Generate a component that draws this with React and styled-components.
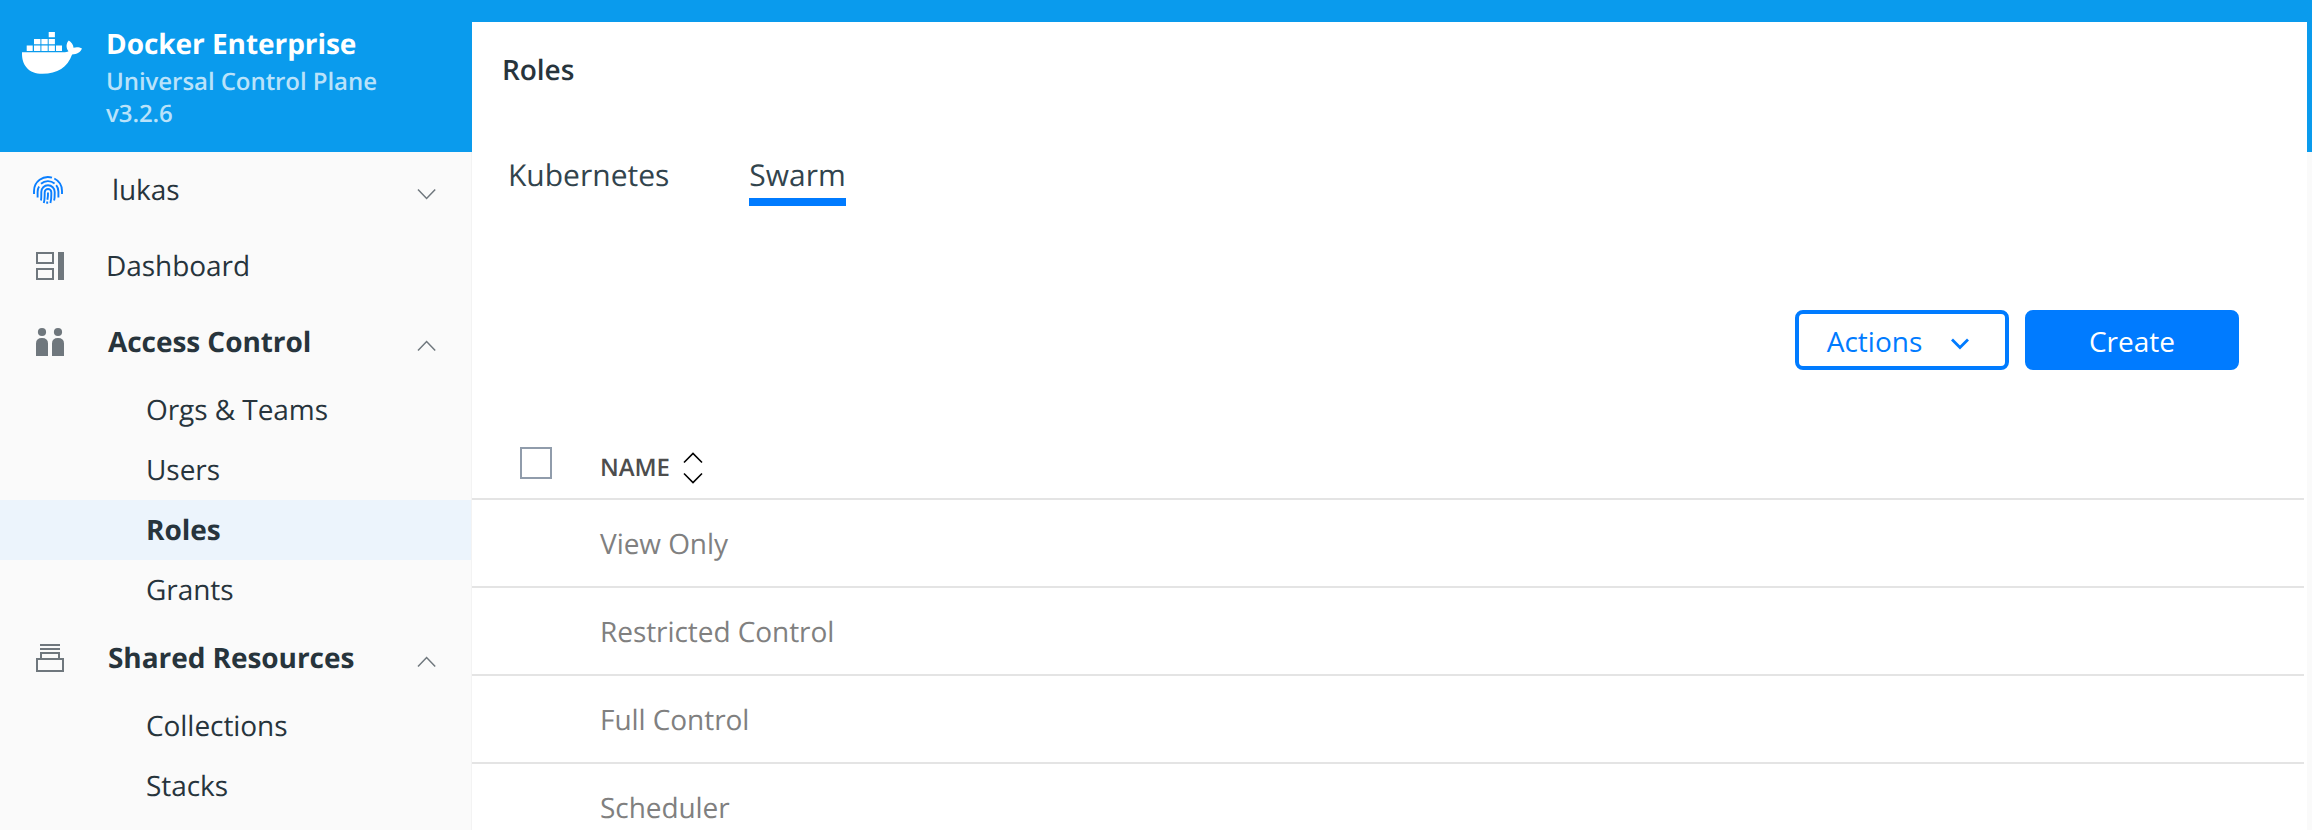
import React from "react";
import styled, { createGlobalStyle, css } from "styled-components";

const GlobalStyle = createGlobalStyle`
  *, *::before, *::after { box-sizing: border-box; }
  html, body, #root { height: 100%; }
  body {
    margin: 0;
    overflow: hidden;
    background: #fafafa;
    color: #27343c;
    font: 400 28px/38px "Open Sans", "Noto Sans", sans-serif;
    letter-spacing: -0.06px;
    text-rendering: geometricPrecision;
  }
`;

const Page = styled.div`
  display: flex;
  height: 830px;
  background: linear-gradient(#0a9bed 152px, #fafafa 152px);
`;

const Sidebar = styled.aside`
  width: 472px;
  flex: none;
`;

const Brand = styled.header`
  display: flex;
  height: 152px;
  padding: 24px 0 0 20px;
  color: #fff;
`;

const BrandLogo = styled.svg`
  width: 64px;
  height: 46px;
  margin-top: 6px;
  flex: none;
`;

const BrandText = styled.div`
  padding-left: 22px;
`;

const ProductName = styled.div`
  font-weight: 700;
  line-height: 40px;
`;

const ProductInfo = styled.div`
  width: 300px;
  font-size: 24px;
  font-weight: 600;
  line-height: 32px;
  padding-top: 2px;
  color: #b9e2fa;
`;

const Nav = styled.nav`
  border-right: 1px solid #f3f3f3;
  height: 678px;
  overflow: hidden;
`;

const NavRow = styled.a`
  display: flex;
  align-items: center;
  height: 76px;
  padding: 0 34px 0 32px;
  font-weight: ${(p) => (p.$bold ? 700 : 400)};
`;

const NavIcon = styled.svg`
  width: 36px;
  height: 36px;
  flex: none;
`;

const NavLabel = styled.span`
  flex: 1;
  padding-left: ${(p) => p.$indent ?? 38}px;
`;

const Caret = styled.svg`
  width: 20px;
  height: 12px;
  margin-top: 8px;
  fill: none;
  stroke: #6f777d;
  stroke-width: 1.5;
`;

const SubRow = styled.a`
  display: flex;
  align-items: center;
  height: 60px;
  padding-left: 146px;
  ${(p) =>
    p.$active &&
    css`
      background: #ecf4fc;
      font-weight: 700;
    `}
`;

const Main = styled.main`
  width: 1835px;
  margin-top: 22px;
  background: #fff;
  overflow: hidden;
`;

const Title = styled.h1`
  margin: 0;
  padding: 29px 0 0 30px;
  font-size: 28px;
  font-weight: 600;
  line-height: 38px;
`;

const Tabs = styled.div`
  display: flex;
  gap: 80px;
  padding: 67px 0 0 36px;
`;

const Tab = styled.div`
  height: 50px;
  font-size: 30px;
  line-height: 38px;
  letter-spacing: 0;
  color: #32444d;
  border-bottom: 8px solid ${(p) => (p.$active ? "#007bff" : "transparent")};
`;

const Toolbar = styled.div`
  display: flex;
  justify-content: flex-end;
  gap: 16px;
  padding: 104px 68px 0 0;
`;

const Button = styled.button`
  display: flex;
  align-items: center;
  justify-content: center;
  gap: 29px;
  width: 214px;
  height: 60px;
  padding: 2px ${(p) => (p.$primary ? 0 : 8)}px 0 0;
  border: 4px solid #007bff;
  border-radius: 8px;
  font: inherit;
  background: ${(p) => (p.$primary ? "#007bff" : "#fff")};
  color: ${(p) => (p.$primary ? "#fff" : "#007bff")};
`;

const ButtonCaret = styled.svg`
  width: 18px;
  height: 12px;
  margin-top: 5px;
  fill: none;
  stroke: currentColor;
  stroke-width: 2.8;
`;

const Table = styled.div`
  width: 1832px;
`;

const HeadRow = styled.div`
  display: flex;
  height: 130px;
  padding: 77px 0 0 48px;
  border-bottom: 2px solid #e4e4e4;
`;

const Checkbox = styled.span`
  width: 32px;
  height: 32px;
  border: 2px solid #909cab;
`;

const ColumnName = styled.span`
  padding: 5px 0 0 48px;
  font-size: 24px;
  font-weight: 600;
  line-height: 32px;
  color: #4d4d4d;
`;

const SortIcon = styled.svg`
  width: 20px;
  height: 32px;
  margin: 5px 0 0 13px;
  fill: none;
  stroke: #000;
  stroke-width: 1.6;
`;

const Row = styled.div`
  display: flex;
  align-items: center;
  height: 88px;
  padding: 2px 0 0 128px;
  border-bottom: 2px solid #e4e4e4;
  color: #808080;
`;

const CaretIcon = ({ up }) => (
  <Caret viewBox="0 0 20 12">
    <path d={up ? "M1 10.5 9.600 1.500 18.200 10.500" : "M1 1.500 9.600 10.500 18.200 1.500"} />
  </Caret>
);

const DockerLogo = () => (
  <BrandLogo viewBox="20 30 64 46" fill="currentColor">
    <path d="M48.7 32h6.2v5.2h-6.2zM34 39h6.4v5.2H34zM41.4 39h6.3v5.2h-6.3zM48.7 39h6.2v5.2h-6.2zM26.7 45.6h6v5.4h-6zM34 45.6h6.4V51H34zM41.4 45.6h6.3V51h-6.3zM48.7 45.6h6.2V51h-6.2zM56 45.6h6V51h-6z" />
    <path d="M22 52.2H63.5c2 0 3.800-.4 5-1-2.800-3.400-2.400-7.900.3-10.700 2.700 1.900 4.700 4.500 4.700 7.200 2.800-.9 6.200-.6 8.500.9-1.500 3.700-4.900 5.900-9.900 5.900C67.500 67.500 57.500 73.800 42.500 73.800 28.500 73.800 21.500 65 22 52.200z" />
  </BrandLogo>
);

const UserIcon = () => (
  <NavIcon viewBox="32 172 36 36" fill="none" stroke="#0a7fff" strokeWidth="1.9">
    <path d="M34 194v-3A14 14 0 0 1 52 177.600M54.300 178.500A14 14 0 0 1 62 191v3" />
    <path d="M37.600 197.500v-5.500c0-2 .5-4 1.500-5.500M56.200 185.200a10.400 10.400 0 0 1 2.200 6.300v6" />
    <path d="M41 183.800a10.400 10.400 0 0 1 13.600-.3" />
    <path d="M41 200.500c.4-2.500.3-5 .3-8.500a6.700 6.700 0 0 1 13.400 0c0 3.500.1 6-.6 8.500" />
    <path d="M43.800 203c1-3.500.9-7 .9-10.700a3.300 3.300 0 0 1 6.600 0c0 4 .3 7-.9 10.700M48 192.500c.1 3-.1 5-.6 7.200M47.200 201.500v2.200" />
  </NavIcon>
);

const DashboardIcon = () => (
  <NavIcon viewBox="32 248 36 36" fill="none" stroke="#6f777d" strokeWidth="2">
    <path d="M37 253h16v10H37zM37 269h16v10H37z" />
    <path d="M58 252h6v28h-6z" fill="#6f777d" stroke="none" />
  </NavIcon>
);

const PeopleIcon = () => (
  <NavIcon viewBox="32 324 36 36" fill="#6f777d">
    <circle cx="42" cy="332" r="4.100" />
    <circle cx="58" cy="332" r="4.100" />
    <path d="M36 356V343.500Q36 338 42 338t6 5.500V356zM52 356V343.500Q52 338 58 338t6 5.500V356z" />
  </NavIcon>
);

const StackIcon = () => (
  <NavIcon viewBox="32 640 36 36" fill="none" stroke="#6f777d" strokeWidth="2">
    <path d="M40 645h20M40 649h20M41 658v-5h18v5M37 659h26v12H37z" />
  </NavIcon>
);

const roles = ["View Only", "Restricted Control", "Full Control", "Scheduler"];

export default function App() {
  return (
    <>
      <GlobalStyle />
      <Page>
        <Sidebar>
          <Brand>
            <DockerLogo />
            <BrandText>
              <ProductName>Docker Enterprise</ProductName>
              <ProductInfo>
                Universal Control Plane
                <br />
                v3.2.6
              </ProductInfo>
            </BrandText>
          </Brand>
          <Nav>
            <NavRow>
              <UserIcon />
              <NavLabel $indent={44}>lukas</NavLabel>
              <CaretIcon />
            </NavRow>
            <NavRow>
              <DashboardIcon />
              <NavLabel>Dashboard</NavLabel>
            </NavRow>
            <NavRow $bold>
              <PeopleIcon />
              <NavLabel $indent={40}>Access Control</NavLabel>
              <CaretIcon up />
            </NavRow>
            <SubRow>Orgs &amp; Teams</SubRow>
            <SubRow>Users</SubRow>
            <SubRow $active>Roles</SubRow>
            <SubRow>Grants</SubRow>
            <NavRow $bold>
              <StackIcon />
              <NavLabel $indent={40}>Shared Resources</NavLabel>
              <CaretIcon up />
            </NavRow>
            <SubRow>Collections</SubRow>
            <SubRow>Stacks</SubRow>
          </Nav>
        </Sidebar>
        <Main>
          <Title>Roles</Title>
          <Tabs>
            <Tab>Kubernetes</Tab>
            <Tab $active>Swarm</Tab>
          </Tabs>
          <Toolbar>
            <Button>
              Actions
              <ButtonCaret viewBox="0 0 18 12">
                <path d="M1 1.500 9 9.500 17 1.500" />
              </ButtonCaret>
            </Button>
            <Button $primary>Create</Button>
          </Toolbar>
          <Table>
            <HeadRow>
              <Checkbox />
              <ColumnName>NAME</ColumnName>
              <SortIcon viewBox="0 0 20 32">
                <path d="M1 10.500 10 1.500 19 10.500M1 21.500 10 30.500 19 21.500" />
              </SortIcon>
            </HeadRow>
            {roles.map((role) => (
              <Row key={role}>{role}</Row>
            ))}
          </Table>
        </Main>
      </Page>
    </>
  );
}
